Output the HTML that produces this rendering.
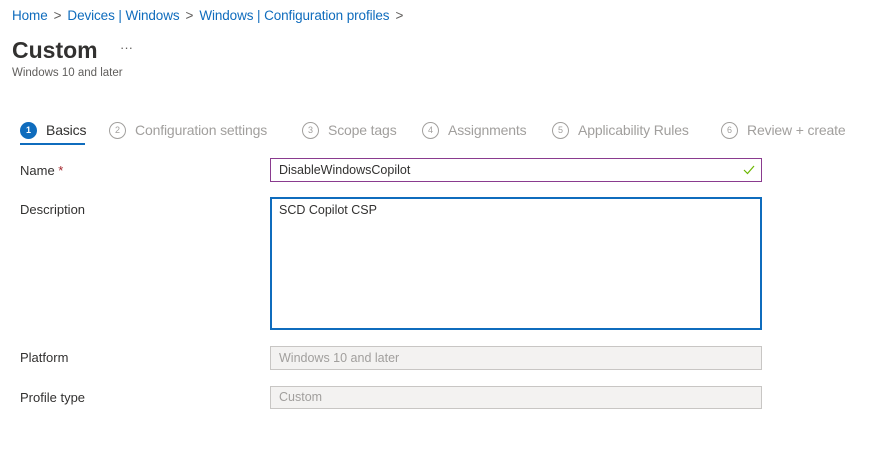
<!DOCTYPE html>
<html><head><style>
body{margin:0;width:869px;height:451px;background:#fff;font-family:"Liberation Sans",sans-serif;position:relative;overflow:hidden;color:#323130}
.a{position:absolute;white-space:nowrap}
.bc{font-size:13.5px;color:#0f6cbd;top:8px;left:12px;letter-spacing:-0.1px}
.bc span{color:#605e5c;margin:0 6px}
.tab{position:absolute;top:121px;font-size:14px;color:#a19f9d;line-height:18px;letter-spacing:-0.15px}
.c{display:inline-block;width:15px;height:15px;border:1px solid #a19f9d;border-radius:50%;font-size:9px;text-align:center;line-height:15px;margin-right:9px;vertical-align:2px;letter-spacing:0}
.lbl{font-size:13px;left:20px;color:#323130}
.in{position:absolute;left:270px;box-sizing:border-box;font-size:12.5px;padding-left:8px;color:#323130}
</style></head><body>
<div class="a bc">Home<span>&gt;</span>Devices | Windows<span>&gt;</span>Windows | Configuration profiles<span>&gt;</span></div>
<div class="a" style="left:12px;top:37px;font-size:23px;font-weight:bold;color:#323130">Custom</div>
<div class="a" style="left:120px;top:40px;font-size:13px;color:#605e5c">···</div>
<div class="a" style="left:12px;top:67px;font-size:11.5px;color:#605e5c">Windows 10 and later</div>

<div class="tab" style="left:20px;color:#323130"><span class="c" style="background:#0f6cbd;border-color:#0f6cbd;color:#fff;font-weight:bold">1</span>Basics</div>
<div class="a" style="left:20px;top:143px;width:65px;height:2px;background:#0f6cbd"></div>
<div class="tab" style="left:109px"><span class="c">2</span>Configuration settings</div>
<div class="tab" style="left:302px"><span class="c">3</span>Scope tags</div>
<div class="tab" style="left:422px"><span class="c">4</span>Assignments</div>
<div class="tab" style="left:552px"><span class="c">5</span>Applicability Rules</div>
<div class="tab" style="left:721px"><span class="c">6</span>Review + create</div>

<div class="a lbl" style="top:163px">Name <span style="color:#a4262c">*</span></div>
<div class="in" style="top:158px;height:24px;border:1px solid #8a3b8f;line-height:22px;width:492px">DisableWindowsCopilot<svg style="position:absolute;right:6px;top:6px" width="12" height="10" viewBox="0 0 12 10"><path d="M1 5l3.5 3.5L11 1" fill="none" stroke="#6bb700" stroke-width="1.2"/></svg></div>
<div class="a lbl" style="top:202px">Description</div>
<div class="in" style="top:197px;height:133px;border:2px solid #0f6cbd;padding-top:4px;padding-left:7px;width:492px">SCD Copilot CSP</div>
<div class="a lbl" style="top:350px">Platform</div>
<div class="in" style="top:346px;height:24px;border:1px solid #c8c6c4;background:#f3f2f1;color:#a19f9d;line-height:22px;width:492px">Windows 10 and later</div>
<div class="a lbl" style="top:390px">Profile type</div>
<div class="in" style="top:386px;height:23px;border:1px solid #c8c6c4;background:#f3f2f1;color:#a19f9d;line-height:21px;width:492px">Custom</div>
</body></html>
